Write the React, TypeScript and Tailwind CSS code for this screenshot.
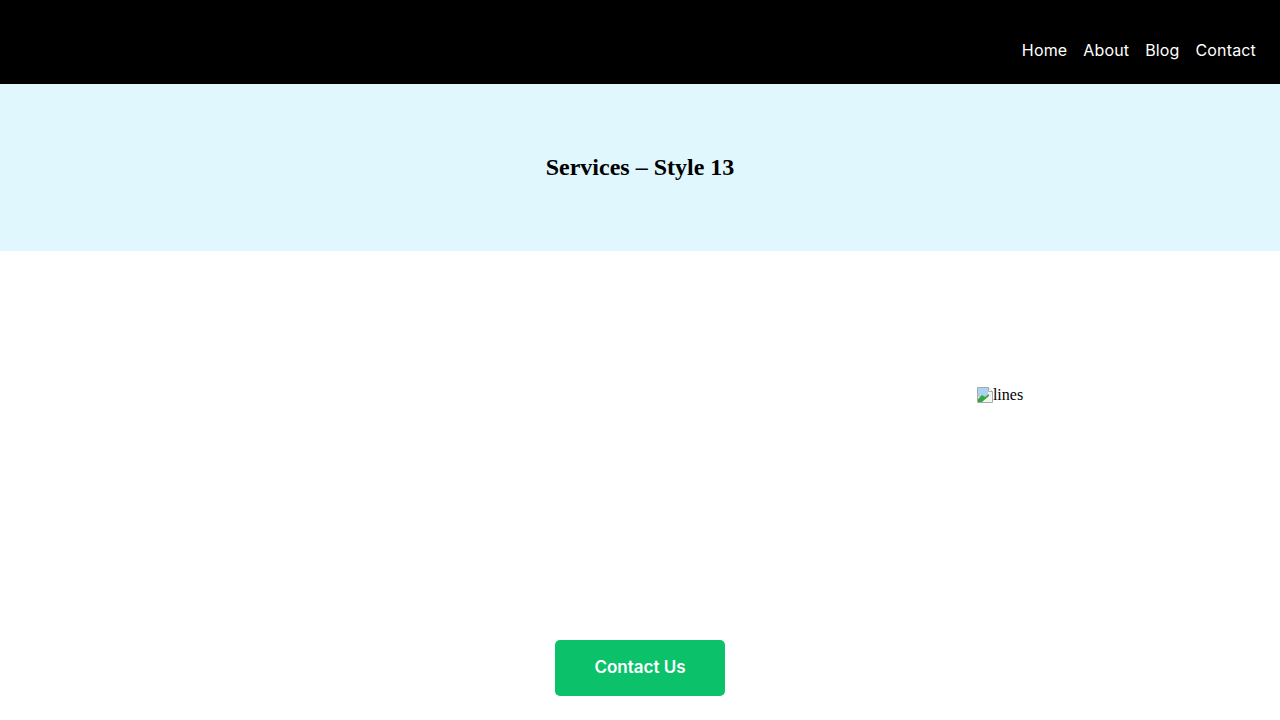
import React from "react";

const NAV = ["Home", "About", "Blog", "Contact"];

function BrokenImage({ alt }: { alt: string }) {
  return (
    <span className="inline-flex items-center font-['Liberation_Serif',serif] text-base leading-[18px] text-black">
      <svg width="16" height="16" viewBox="0 0 16 16" className="block shrink-0">
        <path d="M0.5 0.5h11l4 4v11H0.5z" fill="#f4f4f4" stroke="#a8a8a8" />
        <path d="M1 1h10v9H1z" fill="#a9d3ef" />
        <path d="M1 12l4-4 3 2 4-3v2L5 15H1z" fill="#3aa53a" />
        <path d="M9 15l6-6v6z" fill="#f4f4f4" />
        <path d="M11.5 0.5v4h4" fill="#fff" stroke="#a8a8a8" />
      </svg>
      <span>{alt}</span>
    </span>
  );
}

export default function App() {
  return (
    <div className="flex min-h-[720px] flex-col bg-white">
      <header className="flex h-[84px] items-end justify-end bg-black px-6 pb-[22px]">
        <nav className="flex gap-4 font-[Inter,sans-serif] text-base tracking-[0.15px] text-white">
          {NAV.map((n) => (
            <a key={n} href="#">
              {n}
            </a>
          ))}
        </nav>
      </header>

      <section className="flex h-[167px] items-center justify-center bg-[#e0f7fe] pb-[2px]">
        <h1 className="font-['Liberation_Serif',serif] text-[24px] font-bold text-black">
          Services – Style 13
        </h1>
      </section>

      <section className="grid h-[389px] grid-cols-[720px_1fr] items-start pt-[135px]">
        <div />
        <div className="flex justify-center">
          <BrokenImage alt="lines" />
        </div>
      </section>

      <div className="flex justify-center pb-6">
        <button className="h-[56px] w-[170px] rounded-[5px] bg-[#0bc26b] font-[Inter,sans-serif] text-[17px] font-semibold text-white">
          Contact Us
        </button>
      </div>
    </div>
  );
}
